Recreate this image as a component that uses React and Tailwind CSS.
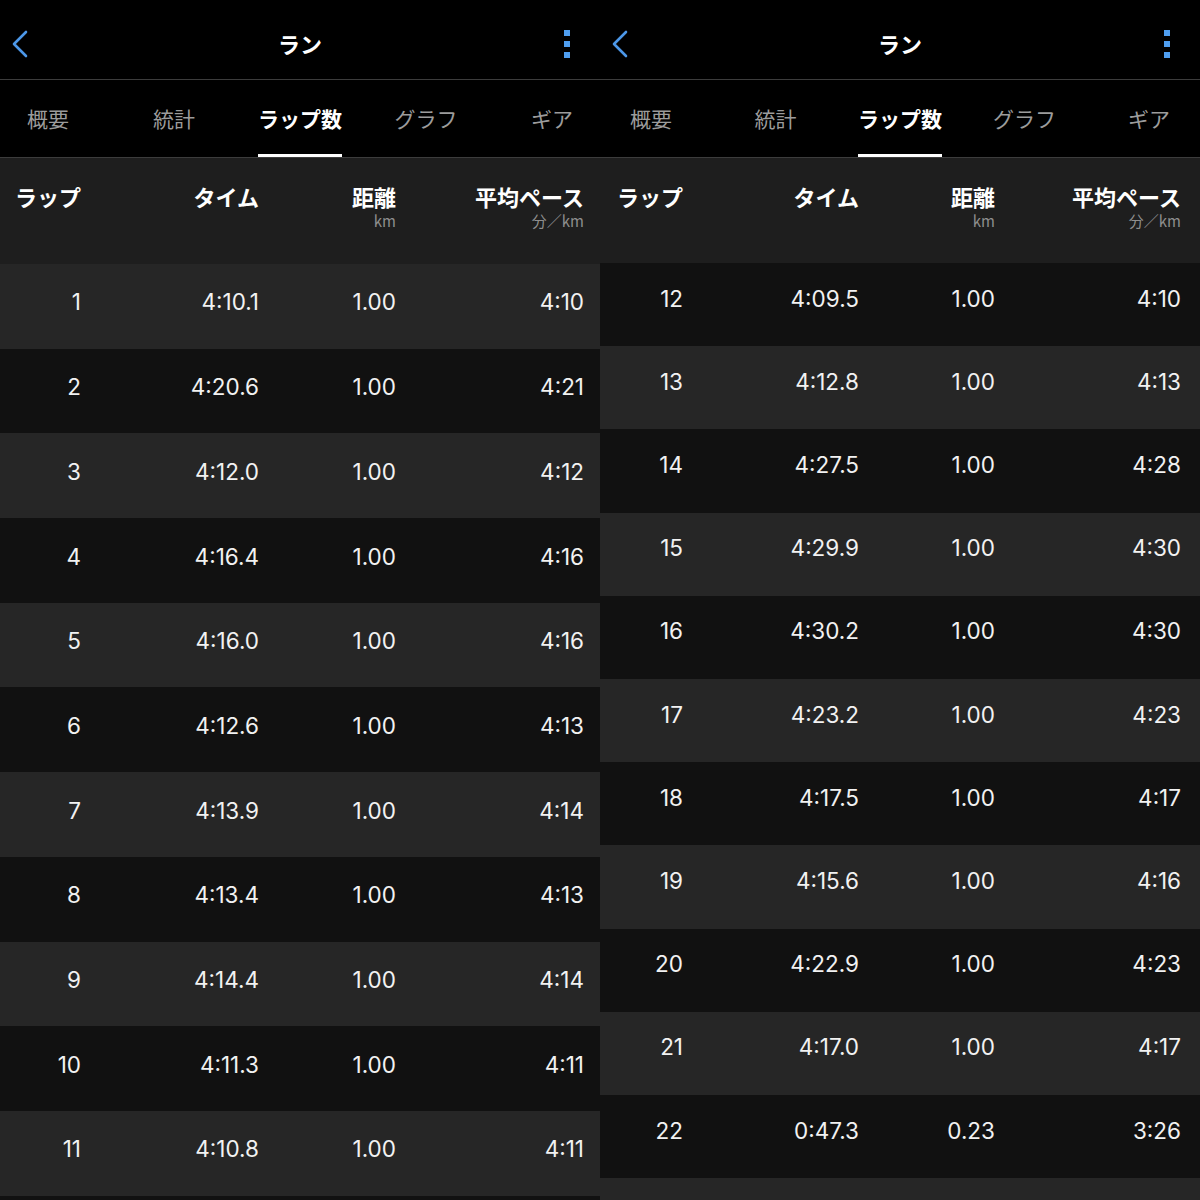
import React from "react";

const LEFT = [
  ["1", "4:10.1", "1.00", "4:10"],
  ["2", "4:20.6", "1.00", "4:21"],
  ["3", "4:12.0", "1.00", "4:12"],
  ["4", "4:16.4", "1.00", "4:16"],
  ["5", "4:16.0", "1.00", "4:16"],
  ["6", "4:12.6", "1.00", "4:13"],
  ["7", "4:13.9", "1.00", "4:14"],
  ["8", "4:13.4", "1.00", "4:13"],
  ["9", "4:14.4", "1.00", "4:14"],
  ["10", "4:11.3", "1.00", "4:11"],
  ["11", "4:10.8", "1.00", "4:11"],
];

const RIGHT = [
  ["12", "4:09.5", "1.00", "4:10"],
  ["13", "4:12.8", "1.00", "4:13"],
  ["14", "4:27.5", "1.00", "4:28"],
  ["15", "4:29.9", "1.00", "4:30"],
  ["16", "4:30.2", "1.00", "4:30"],
  ["17", "4:23.2", "1.00", "4:23"],
  ["18", "4:17.5", "1.00", "4:17"],
  ["19", "4:15.6", "1.00", "4:16"],
  ["20", "4:22.9", "1.00", "4:23"],
  ["21", "4:17.0", "1.00", "4:17"],
  ["22", "0:47.3", "0.23", "3:26"],
];

const TABS = ["概要", "統計", "ラップ数", "グラフ", "ギア"];

const jp = { fontFamily: '"Noto Sans CJK JP", "Noto Sans", sans-serif' };
const num = { fontFamily: 'Inter, "Noto Sans", sans-serif' };

function TopBar() {
  return (
    <div className="grid h-[79px] shrink-0 grid-cols-[1fr_auto_1fr] items-center bg-black pt-[8px]">
      <div className="pl-[11px]">
        <svg width="18" height="30" viewBox="0 0 18 30" fill="none">
          <path d="M15 3 L3 15 L15 27" stroke="#4c97e8" strokeWidth="2.6" strokeLinecap="round" strokeLinejoin="round" />
        </svg>
      </div>
      <div className="text-[22px] font-bold text-white" style={jp}>
        ラン
      </div>
      <div className="flex justify-end pr-[30px]">
        <div className="flex flex-col gap-[5px]">
          <div className="h-[6px] w-[6px] bg-[#4f9ef0]" />
          <div className="h-[6px] w-[6px] bg-[#4f9ef0]" />
          <div className="h-[6px] w-[6px] bg-[#4f9ef0]" />
        </div>
      </div>
    </div>
  );
}

function Tabs({ tabW }) {
  return (
    <div className="flex h-[77px] shrink-0 justify-center overflow-hidden bg-black" style={jp}>
      {TABS.map((t, i) => (
        <div key={t} className={`flex h-full shrink-0 justify-center ${tabW}`}>
          <div className="flex h-full flex-col">
            <div
              className={`flex flex-1 items-center pt-[4px] text-[21px] ${
                i === 2 ? "font-bold text-white" : "text-[#9c9c9c]"
              }`}
            >
              {t}
            </div>
            <div className={`h-[3px] ${i === 2 ? "bg-white" : "bg-transparent"}`} />
          </div>
        </div>
      ))}
    </div>
  );
}

function HeaderRow({ cols, h }) {
  return (
    <div className={`grid shrink-0 bg-[#1e1e1e] pt-[27px] ${cols} ${h}`} style={jp}>
      <div className="text-right text-[22px] font-bold leading-[22px] text-white">ラップ</div>
      <div className="text-right text-[22px] font-bold leading-[22px] text-white">タイム</div>
      <div className="text-right">
        <div className="text-[22px] font-bold leading-[22px] text-white">距離</div>
        <div className="mt-[5px] text-[15px] leading-[17px] text-[#8e8e8e]">km</div>
      </div>
      <div className="text-right">
        <div className="text-[22px] font-bold leading-[22px] text-white">平均ペース</div>
        <div className="mt-[5px] text-[15px] leading-[17px] text-[#8e8e8e]">分／km</div>
      </div>
    </div>
  );
}

function Panel({ rows, cols, tabW, headH, rowH, firstDark, pad }) {
  const all = [...rows, null];
  return (
    <div className="flex h-[1200px] w-[600px] shrink-0 flex-col overflow-hidden bg-black">
      <TopBar />
      <div className="h-[1px] shrink-0 bg-[#3c3c3c]" />
      <Tabs tabW={tabW} />
      <div className="h-[1px] shrink-0 bg-[#3c3c3c]" />
      <HeaderRow cols={cols} h={headH} />
      {all.map((r, i) => {
        const dark = firstDark ? i % 2 === 0 : i % 2 === 1;
        return (
          <div
            key={i}
            className={`grid shrink-0 items-center text-[22.5px] text-[#f2f2f2] ${cols} ${rowH} ${pad} ${
              dark ? "bg-[#111111]" : "bg-[#262626]"
            }`}
            style={num}
          >
            {r &&
              r.map((c, j) => (
                <div key={j} className="text-right">
                  {c}
                </div>
              ))}
          </div>
        );
      })}
    </div>
  );
}

export default function App() {
  return (
    <div className="flex h-[1200px] w-[1200px] overflow-hidden bg-black">
      <Panel
        rows={LEFT}
        cols="grid-cols-[81px_178px_137px_188px]"
        tabW="w-[126px]"
        headH="h-[106px]"
        rowH="h-[84.7px]"
        firstDark={false}
        pad="pb-[8px]"
      />
      <Panel
        rows={RIGHT}
        cols="grid-cols-[83px_176px_136px_186px]"
        tabW="w-[124.5px]"
        headH="h-[105px]"
        rowH="h-[83.2px]"
        firstDark={true}
        pad="pb-[12px]"
      />
    </div>
  );
}
